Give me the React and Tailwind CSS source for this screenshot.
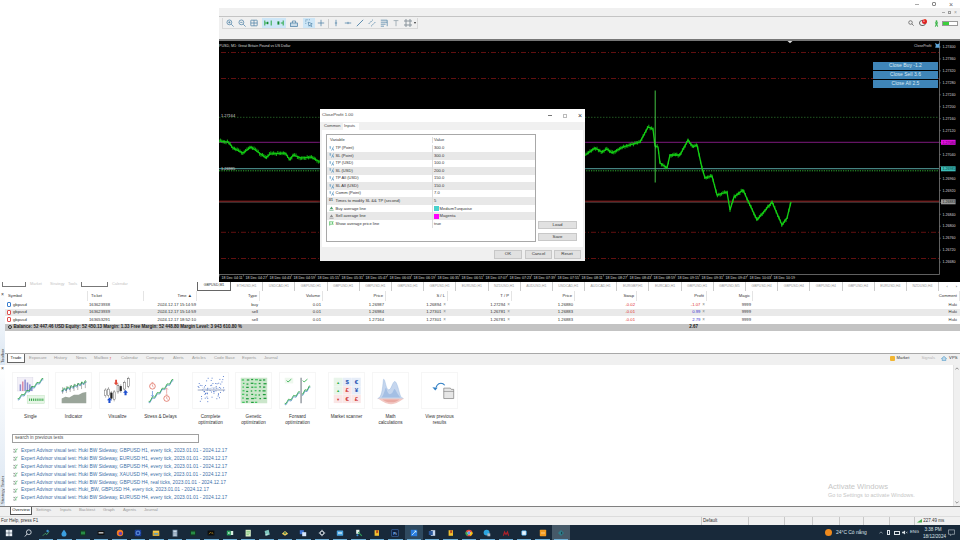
import { Fragment } from 'react'

const TIMES = ['04:11','04:27','04:43','04:59','05:15','05:31','05:47','06:03','06:19','06:35','06:51','07:07','07:23','07:39','07:55','08:11','08:27','08:43','08:59','09:15','09:31','09:47','10:03','10:19']
const PRICES = ['1.27400','1.27360','1.27320','1.27280','1.27240','1.27200','1.27160','1.27120','','1.27040','','1.26960','1.26920','','1.26840','1.26800','1.26760','1.26720','1.26680']

const CURVE = [[219,141],[228,142],[233,148],[243,153],[251,147],[258,152],[266,158],[270,154],[285,153],[290,160],[293,155],[301,158],[311,157],[320,162],[584,156],[595,148],[602,152],[607,149],[612,153],[623,147],[640,142],[648,127],[653,129],[655,146],[658,147],[660,163],[667,168],[670,155],[680,155],[688,140],[693,147],[697,145],[702,168],[705,178],[712,176],[717,195],[727,192],[730,210],[734,197],[743,190],[757,220],[772,202],[782,225],[787,218],[791,202]]

function curveY(x) {
  for (let i = 1; i < CURVE.length; i++) {
    if (x <= CURVE[i][0]) {
      const [x0, y0] = CURVE[i - 1]
      const [x1, y1] = CURVE[i]
      return y0 + ((y1 - y0) * (x - x0)) / (x1 - x0)
    }
  }
  return 202
}

function Candles() {
  const bars = []
  for (let x = 219; x < 791; x += 1.4) {
    if (x > 320 && x < 584) continue
    const y = curveY(x)
    const n = Math.sin(x * 12.9898) * 43758.5453
    const r = n - Math.floor(n)
    bars.push(<line key={x} x1={x} x2={x} y1={y - 0.8 - r * 1.8} y2={y + 0.8 + (1 - r) * 1.8} />)
  }
  const left = CURVE.filter((p) => p[0] <= 320).map((p) => p.join(',')).join(' ')
  const right = CURVE.filter((p) => p[0] >= 584).map((p) => p.join(',')).join(' ')
  return (
    <g stroke="#14cf14" strokeWidth="0.9" fill="none">
      <polyline points={left} strokeWidth="1.1" />
      <polyline points={right} strokeWidth="1.3" />
      {bars}
    </g>
  )
}

function Chart() {
  return (
    <svg viewBox="219 41 741 241" className="block h-[241px] w-[741px]">
      <rect x="219" y="41" width="741" height="241" fill="#000" />
      {[52.5, 78.5, 232.3, 258.5].map((y) => (
        <line key={y} x1="221" x2="939" y1={y} y2={y} stroke="#7a1414" strokeWidth="0.8" strokeDasharray="5 2 1 2" />
      ))}
      <line x1="219" x2="939" y1="117.3" y2="117.3" stroke="#2f7a2f" strokeWidth="0.7" strokeDasharray="1.5 1.5" />
      <line x1="219" x2="939" y1="142.3" y2="142.3" stroke="#8c1d8c" strokeWidth="0.9" />
      <line x1="219" x2="939" y1="168.7" y2="168.7" stroke="#5fb4b1" strokeWidth="0.9" />
      <line x1="219" x2="939" y1="170.8" y2="170.8" stroke="#2fae2f" strokeWidth="1" strokeDasharray="1.2 1.2" />
      <line x1="219" x2="939" y1="201.2" y2="201.2" stroke="#9a1a1a" strokeWidth="1" />
      <line x1="219" x2="939" y1="202.2" y2="202.2" stroke="#7a6a6a" strokeWidth="0.6" />
      <Candles />
      <line x1="655.2" x2="655.2" y1="90.5" y2="182.5" stroke="#4bd84b" strokeWidth="0.9" />
      <path d="M219 274.5H939.5V41" fill="none" stroke="#8a8a8a" strokeWidth="0.7" />
      <path d="M787.5 41h5l-2.5 2.2z" fill="#ddd" />
      <g fontSize="3.6" fill="#d8d8d8" fontFamily="'Liberation Sans',sans-serif">
        <text x="219" y="46.8">PUSD, M1:  Great Britain Pound vs US Dollar</text>
        <text x="914" y="46.8" fill="#cfcfcf">CloseProfit</text>
        <text x="221" y="116.5" fontSize="3.9">1.27164</text>
        <text x="221" y="170" fontSize="3.9">1.26985</text>
        {TIMES.map((t, i) => (
          <Fragment key={t}>
            <line x1={219.5 + i * 24} x2={219.5 + i * 24} y1="274.5" y2="276.5" stroke="#888" strokeWidth="0.5" />
            <text x={221.5 + i * 24} y="278.8">18 Dec {t}</text>
          </Fragment>
        ))}
        {PRICES.map((p, i) => (
          <Fragment key={i}>
            <line x1="939.5" x2="941" y1={47 + i * 11.95} y2={47 + i * 11.95} stroke="#888" strokeWidth="0.5" />
            {p && <text x="942.5" y={48.2 + i * 11.95}>{p}</text>}
          </Fragment>
        ))}
      </g>
      <path d="M935 43l2.5 1.3 2.5-1.3-.8 2.4.6 2.3h-4.6l.6-2.3z" fill="#5fa8dc" />
      <g fontSize="3.6" fontFamily="'Liberation Sans',sans-serif">
        <rect x="941" y="139.8" width="14.6" height="5" fill="#e010e0" />
        <text x="942.5" y="143.6" fill="#500050">1.27080</text>
        <rect x="941" y="166.3" width="14.6" height="5" fill="#3cbcb8" />
        <text x="942.5" y="170.1" fill="#083a3a">1.26985</text>
        <rect x="941" y="199.3" width="14.6" height="5" fill="#999" />
        <text x="942.5" y="203.1" fill="#222">1.26883</text>
      </g>
    </svg>
  )
}

const INPUTS = [
  ['v', 'TP (Point)', '300.0'],
  ['v', 'SL (Point)', '300.0'],
  ['v', 'TP (USD)', '100.0'],
  ['v', 'SL  (USD)', '200.0'],
  ['v', 'TP All (USD)', '150.0'],
  ['v', 'SL All (USD)', '150.0'],
  ['v', 'Comm (Point)', '7.0'],
  ['n', 'Times to modify SL && TP (second)', '5'],
  ['b', 'Buy average line', 'MediumTurquoise', 'bg-[#48d1cc]'],
  ['s', 'Sell average line', 'Magenta', 'bg-[#ff00ff]'],
  ['t', 'Show average price line', 'true'],
]

function InputIcon({ kind }) {
  if (kind === 'n') return <span className="w-[5px] text-[3.4px] font-bold leading-none text-[#444]">01</span>
  return (
    <svg viewBox="0 0 6 6" className="h-[5px] w-[5px] shrink-0">
      {kind === 'v' && <path d="M.5 1h2M1.5 1v2.6M3 5.5L5.5.5M3.6 3.6h2v2" fill="none" stroke="#3f86b8" strokeWidth=".7" />}
      {kind === 'b' && <path d="M3 .5l2 3H1zM.5 4.5h5v1h-5z" fill="#4f9f6f" />}
      {kind === 's' && <path d="M3 .5l2 3H1zM.5 4.5h5v1h-5z" fill="#888" />}
      {kind === 't' && <path d="M.8.5v5M.8 1h4.4L3.6 2.4l1.6 1.4H.8" fill="none" stroke="#39b54a" strokeWidth=".8" />}
    </svg>
  )
}

function DlgButton({ children, className = '' }) {
  return (
    <div className={`flex items-center justify-center border border-[#c8c8c8] bg-[#e1e1e1] text-[4.4px] text-[#333] ${className}`}>
      {children}
    </div>
  )
}

function Dialog() {
  return (
    <div className="absolute left-[101px] top-[68px] flex h-[152px] w-[265px] flex-col bg-[#f0f0f0] shadow-[0_0_3px_rgba(0,0,0,0.5)]">
      <div className="flex h-[13px] items-center justify-between bg-white pl-[2px] pr-[3px] text-[#444]">
        <span className="text-[4.4px]">CloseProfit 1.00</span>
        <div className="flex items-center gap-[11px] text-[#777]">
          <span className="h-px w-[4px] bg-[#777]" />
          <span className="h-[4px] w-[4px] border-[0.5px] border-[#bbb]" />
          <span className="text-[7px] leading-none text-[#333]">×</span>
        </div>
      </div>
      <div className="flex h-[8px] items-end pl-[3px] text-[4.1px] text-[#444]">
        <span className="w-[20px] pb-px pl-[1px]">Common</span>
        <span className="w-[16px] bg-white pb-px pl-[1px]">Inputs</span>
      </div>
      <div className="mx-[2px] flex h-[117px] bg-white p-[4px]">
        <div className="flex h-[108px] w-[210px] flex-col border border-[#a8a8a8] text-[4.1px] text-[#333]">
          <div className="flex h-[9.5px] shrink-0 items-center">
            <span className="w-[104.5px] pl-[3px]">Variable</span>
            <span className="border-l border-[#ddd] pl-[1.5px]">Value</span>
          </div>
          {INPUTS.map((r, i) => (
            <div key={r[1]} className={`flex h-[7.55px] shrink-0 items-center ${i % 2 ? 'bg-[#e8e8e8]' : 'bg-white'}`}>
              <div className="flex w-[104.5px] items-center gap-[1.5px] pl-[2px]">
                <InputIcon kind={r[0]} />
                <span className="whitespace-nowrap">{r[1]}</span>
              </div>
              <div className="flex h-full items-center gap-[1px] border-l border-[#ddd] pl-[1.5px]">
                {r[3] && <span className={`h-[5px] w-[4.5px] ${r[3]}`} />}
                <span>{r[2]}</span>
              </div>
            </div>
          ))}
        </div>
        <div className="ml-[1px] flex flex-1 flex-col justify-end gap-[4px] pb-[2px] pl-[1px] pr-[1px]">
          <DlgButton className="h-[8px] w-[39px]">Load</DlgButton>
          <DlgButton className="h-[8px] w-[39px]">Save</DlgButton>
        </div>
      </div>
      <div className="flex flex-1 items-center justify-end gap-[1.5px] pr-[4.5px]">
        <DlgButton className="h-[9px] w-[28px] border-[#2f7fbf]">OK</DlgButton>
        <DlgButton className="ml-[1.5px] h-[9px] w-[27px]">Cancel</DlgButton>
        <DlgButton className="h-[9px] w-[27px]">Reset</DlgButton>
      </div>
    </div>
  )
}

function ToolIcon({ d, active, w = 12 }) {
  return (
    <div className={`flex h-[10px] items-center justify-center ${active ? 'bg-[#cde6f7]' : ''}`} style={{ width: w }}>
      <svg viewBox="0 0 10 10" className="h-[8px] w-[8px]" fill="none" strokeWidth="0.9">{d}</svg>
    </div>
  )
}

const BL = '#4a7fa5'
function Toolbar() {
  return (
    <div className="flex h-[22px] items-start justify-between bg-[#f0f0f0] pr-[2px]">
      <div className="ml-[3px] mt-[1px] flex h-[11px] items-center border-x border-b border-[#d8d8d8]">
        <ToolIcon d={<g stroke={BL}><circle cx="4.2" cy="4.2" r="3" /><path d="M6.5 6.5L9.5 9.5M2.8 4.2h2.8M4.2 2.8v2.8" /></g>} w={13} />
        <ToolIcon d={<g stroke={BL}><circle cx="4.2" cy="4.2" r="3" /><path d="M6.5 6.5L9.5 9.5M2.8 4.2h2.8" /></g>} />
        <ToolIcon d={<g stroke={BL}><rect x="1" y="1.5" width="8" height="7" rx=".5" /><path d="M1 5h8M5 1.5v7" /></g>} />
        <div className="w-[1.5px]" />
        <ToolIcon active d={<g stroke="#2faa4a" strokeWidth="1.3"><path d="M1 2v6M1 5h3M9 2v6" /><path d="M4.5 3.5v3" stroke="#138a30" strokeWidth="2" /></g>} />
        <ToolIcon active d={<g stroke="#2faa4a" strokeWidth="1.3"><path d="M9 2v6M9 5H6" /><path d="M3 3v4" stroke="#138a30" strokeWidth="2.4" /></g>} />
        <div className="w-[2.5px]" />
        <ToolIcon d={<g stroke={BL}><rect x=".5" y="5" width="9" height="4.5" fill="#c9dbe8" /><path d="M3 5V2.5h4V5" /></g>} />
        <div className="w-[3px]" />
        <ToolIcon active d={<g stroke={BL}><path d="M1 1h5M1 1v5" strokeDasharray="1 1" /><path d="M4 4l5 2-2 1 1.5 2-1 .5L6 7.5 5 9z" fill="#e6f3fb" /></g>} />
        <ToolIcon d={<path d="M5 1v8M1 5h8" stroke={BL} />} />
        <div className="mx-[1px] h-[9px] w-px bg-[#ccc]" />
        <ToolIcon d={<path d="M5 1v8M3.6 5h2.8" stroke={BL} />} />
        <ToolIcon d={<path d="M1 5h8M5 3.6v2.8" stroke={BL} />} />
        <ToolIcon d={<path d="M1 9L9 1" stroke={BL} strokeWidth="1.1" />} />
        <ToolIcon d={<path d="M1 6L6 1M4 9l5-5" stroke={BL} strokeWidth="1.1" strokeDasharray="2 .8" />} />
        <ToolIcon d={<path d="M1 1.5h8M1 4h8M1 6.5h6M1 9h4M9 1.5V9" stroke={BL} />} />
        <ToolIcon d={<path d="M2 2h6M5 2v7" stroke="#8a9aa5" />} />
        <ToolIcon d={<g stroke="#5a6a75"><rect x="1" y="1" width="3" height="3" rx="1.5" /><rect x="6" y="1" width="3" height="3" rx="1.5" /><rect x="1" y="6" width="3" height="3" rx="1.5" /><rect x="6" y="6" width="3" height="3" rx="1.5" /></g>} />
        <span className="mr-[1px] h-0 w-0 border-x-[1.5px] border-t-[2px] border-x-transparent border-t-[#333]" />
      </div>
      <div className="mt-[1px] flex h-[10px] items-center">
        <svg viewBox="0 0 10 10" className="h-[6px] w-[6px]" fill="none" stroke="#555" strokeWidth="1.2"><circle cx="4.2" cy="4.2" r="3" /><path d="M6.5 6.5l3 3" /></svg>
        <div className="relative ml-[5px] h-[6px] w-[7px] rounded-full border border-[#666]">
          <span className="absolute -right-[2px] -top-[2px] flex h-[5px] w-[5px] items-center justify-center rounded-full bg-[#d22] text-[3.5px] leading-none text-white">1</span>
        </div>
        <svg viewBox="0 0 6 8" className="ml-[8px] h-[7px] w-[5px]" fill="#3cb54a"><circle cx="3" cy="1.2" r="1.1" /><path d="M1 2.6h4L4 5l1 3H4L3 6 2 8H1l1-3z" /></svg>
        <div className="ml-[3.5px] flex h-[5px] w-[16px] border border-[#999] bg-white">
          <div className="h-full w-[6px] bg-[#3bcf3b]" />
        </div>
      </div>
    </div>
  )
}

const DOC_TABS = [
  'GBPUSD,M1','ETHUSD,H1','USDCAD,H1','GBPUSD,H1','GBPUSD,H1','GBPUSD,H1','GBPUSD,H1','GBPUSD,H1','EURUSD,H1','NZDUSD,H1','AUDUSD,H1','USDCAD,H1','AUDCAD,H1','EURGBP,H1','EURCAD,H1','GBPUSD,H1','GBPUSD,M5','GBPUSD,H4','GBPUSD,H4','GBPUSD,H4','GBPUSD,H4','EURUSD,H4','NZDUSD,H4',
]

function DocTabs() {
  return (
    <div className="flex h-[9px] bg-white text-[3.9px]">
      <div className="flex w-[197px] items-start pl-[2px] leading-[4px] text-[#c4c4c4]">
        <span className="h-[5px] w-[24px] border-x border-b border-[#777]" />
        <span className="ml-[4px] w-[20px]">Market</span>
        <span className="w-[18px]">Strategy</span>
        <span className="w-[13px]">Tools</span>
        <span className="h-[5px] w-[27px] border-x border-b border-[#777]" />
        <span className="ml-[4px]">Calendar</span>
      </div>
      {DOC_TABS.map((t, i) => (
        <div
          key={i}
          className={`flex h-full w-[32.2px] shrink-0 items-center justify-center text-[3.5px] ${i === 0 ? 'h-[9px] w-[34px] border-x border-b border-[#666] pb-[0.5px] text-[#333]' : 'border-r border-[#ccc] text-[#9a9a9a]'}`}
        >
          {t}
        </div>
      ))}
      <div className="flex flex-1 items-center justify-end gap-[8px] pr-[3px] text-[#555]">
        <span>‹</span>
        <span className="text-[#222]">›</span>
      </div>
    </div>
  )
}

const COLS = 'grid grid-cols-[83px_56px_53px_63px_63px_63px_62px_64px_63px_62px_70px_46px_207px]'
const HEAD = ['Symbol', 'Ticket', 'Time  ▲', 'Type', 'Volume', 'Price', 'S / L', 'T / P', 'Price', 'Swap', 'Profit', 'Magic', 'Comment']
const TRADES = [
  ['buy', '163623938', '2024.12.17 15:14:59', '0.01', '1.26987', '1.26894', '1.27294', '1.26880', '-0.02', '-1.07', 'text-[#e03030]', '#3a7fd0'],
  ['sell', '163623939', '2024.12.17 15:14:59', '0.01', '1.26984', '1.27301', '1.26781', '1.26883', '-0.01', '0.99', 'text-[#3030d0]', '#e05050'],
  ['sell', '163653291', '2024.12.17 18:52:10', '0.01', '1.27164', '1.27301', '1.26781', '1.26883', '-0.01', '2.79', 'text-[#3030d0]', '#e05050'],
]

function TradeRow({ t, alt }) {
  const cell = 'flex items-center justify-end pr-[2px]'
  const x = <span className="ml-[2px] text-[4.6px] leading-none text-[#888]">×</span>
  return (
    <div className={`${COLS} h-[7.6px] text-[#333] ${alt ? 'bg-[#e9e9e9]' : 'bg-white'}`}>
      <div className="flex items-center gap-[2px] pl-[2px]">
        <span className="flex h-[5px] w-[4px] items-center justify-center rounded-[1px] border-[0.5px] bg-white" style={{ borderColor: t[11] }} />
        <span>gbpusd</span>
      </div>
      <div className="flex items-center pl-[1px]">{t[1]}</div>
      <div className="flex items-center justify-end pr-[1px]">{t[2]}</div>
      <div className={cell}>{t[0]}</div>
      <div className={cell}>{t[3]}</div>
      <div className={cell}>{t[4]}</div>
      <div className={cell}>{t[5]}{x}</div>
      <div className={cell}>{t[6]}{x}</div>
      <div className={cell}>{t[7]}</div>
      <div className={`${cell} text-[#e03030]`}>{t[8]}</div>
      <div className={cell}><span className={t[10]}>{t[9]}</span>{x}</div>
      <div className={cell}>9999</div>
      <div className={`${cell} pr-[3px]`}>Huki</div>
    </div>
  )
}

const TOOL_TABS = [
  ['Exposure', 'w-[25px]'], ['History', 'w-[22px]'], ['News', 'w-[18px]'], ['Mailbox', 'w-[27px]'], ['Calendar', 'w-[25px]'],
  ['Company', 'w-[27px]'], ['Alerts', 'w-[19px]'], ['Articles', 'w-[22px]'], ['Code Base', 'w-[28px]'], ['Experts', 'w-[22px]'], ['Journal', 'w-[24px]'],
]
const TESTER_TABS = [
  ['Settings', 'w-[24px]'], ['Inputs', 'w-[19px]'], ['Backtest', 'w-[24px]'], ['Graph', 'w-[20px]'], ['Agents', 'w-[21px]'], ['Journal', 'w-[24px]'],
]

function SideStrip({ label, h }) {
  return (
    <div className="relative flex w-[5px] shrink-0 flex-col items-center bg-gradient-to-b from-white to-[#dbe6f2]">
      <span className="text-[5px] leading-[7px] text-[#333]">×</span>
      <span className="absolute bottom-[2px] left-0 w-[5px] whitespace-nowrap text-[4.2px] leading-[5px] text-[#444] [writing-mode:vertical-rl] rotate-180" style={{ height: h }}>{label}</span>
    </div>
  )
}

function Toolbox() {
  return (
    <div className="flex h-[74px] text-[4.2px]">
      <SideStrip label="Toolbox" h={16} />
      <div className="flex min-w-0 flex-1 flex-col bg-white">
        <div className={`${COLS} h-[10px] text-[#333]`}>
          {HEAD.map((h, i) => (
            <div key={i} className={`flex items-center border-r border-[#e4e4e4] ${i < 2 ? 'pl-[3px]' : i === 2 ? 'justify-end pr-[4px]' : 'justify-end pr-[2px]'}`}>{h}</div>
          ))}
        </div>
        {TRADES.map((t, i) => <TradeRow key={i} t={t} alt={i === 1} />)}
        <div className="relative flex h-[7.4px] items-center bg-[#c3c3c3] pl-[3px] text-[4.5px] font-bold text-[#222]">
          <span className="mr-[1.5px] h-[4px] w-[4px] rounded-full border-[0.6px] border-[#333]" />
          Balance: 52 447.46 USD  Equity: 52 450.13  Margin: 1.33  Free Margin: 52 448.80  Margin Level: 3 943 610.80 %
          <span className="absolute left-[204px] top-0 flex h-full w-[489px] items-center justify-end">2.67</span>
        </div>
        <div className="flex-1" />
        <div className="flex h-[12px] items-start border-t border-[#a8a8a8] bg-[#f0f0f0]">
          <span className="ml-[2px] flex h-[9px] w-[18px] items-center justify-center border-x border-b border-[#666] bg-white text-[#222]">Trade</span>
          <span className="w-[4px]" />
          {TOOL_TABS.map(([t, w]) => (
            <span key={t} className={`flex h-[8px] shrink-0 items-center text-[#9a9a9a] ${w}`}>
              {t}
              {t === 'Mailbox' && <span className="ml-px mt-[3px] text-[3px] leading-none text-[#d33]">7</span>}
            </span>
          ))}
          <div className="ml-auto flex h-[9px] items-center pr-[2.5px]">
            <span className="h-[4.5px] w-[4.5px] rounded-[1px] bg-[#f2b632]" />
            <span className="ml-[2px] text-[#333]">Market</span>
            <span className="ml-[12px] text-[#b5b5b5]">Signals</span>
            <svg viewBox="0 0 8 7" className="ml-[6px] h-[5px] w-[6px]" fill="#bcd8ea" stroke="#3a8cc0" strokeWidth=".7"><path d="M.5 3.5L4 .5l3.5 3H6.5V6.5h-5V3.5z" /></svg>
            <span className="ml-[2px] text-[#333]">VPS</span>
          </div>
        </div>
      </div>
    </div>
  )
}

function Wave({ from, to, bumps = 5 }) {
  const pts = (off) => {
    const out = []
    const n = bumps * 4
    for (let i = 0; i <= n; i++) {
      const f = i / n
      const x = from[0] + (to[0] - from[0]) * f
      const y = from[1] + (to[1] - from[1]) * f + Math.sin(f * bumps * 6.283) * 1.3 + off
      out.push(`${x.toFixed(1)},${y.toFixed(1)}`)
    }
    return out.join(' ')
  }
  return (
    <g fill="none">
      <polyline points={pts(1.3)} stroke="#5a93c7" strokeWidth=".9" />
      <polyline points={pts(0)} stroke="#2fa84a" strokeWidth=".9" />
    </g>
  )
}

function rnd(i) {
  const n = Math.sin(i * 78.233) * 12345.678
  return n - Math.floor(n)
}

const CARD_ART = {
  single: (
    <>
      <rect x="5" y="5" width="16" height="14" fill="#f3f0f8" stroke="#d8d4e4" strokeWidth=".5" />
      {[[7,12],[9.5,9],[12,7],[14.5,10],[17,12],[19,14]].map(([x, y]) => (
        <rect key={x} x={x} y={y} width="1.6" height={19 - y} fill={x % 2 > 1 ? '#d98ba8' : '#8d8dd0'} />
      ))}
      <Wave from={[5, 27]} to={[32, 6]} />
      <rect x="15" y="24" width="18" height="8" fill="#e6f5e6" stroke="#b8e0b8" strokeWidth=".5" />
      <g fill="#39a84a">{[17,19,21,23,25,27,29,31].map((x) => <rect key={x} x={x} y="27" width="1.1" height="2.5" />)}</g>
    </>
  ),
  indicator: (
    <>
      <path d="M6 27l4-2 4 1 5-3 5 0 4-2 4-1v12H6z" fill="#9aa59a" />
      <Wave from={[6, 18]} to={[32, 9]} bumps={7} />
      <g stroke="#333" strokeWidth=".4">{[7,11,15,19,23,27,31].map((x, i) => <path key={x} d={`M${x} ${15 - i}v${7}`} />)}</g>
    </>
  ),
  visualize: (
    <>
      {[[6,18,6],[9,17,7],[12,21,6],[15,20,8],[19,13,7],[22,14,5],[26,10,7],[30,6,8]].map(([x, y, h], i) => (
        <g key={x}>
          <path d={`M${x} ${y - 2}v${h + 4}`} stroke="#333" strokeWidth=".4" />
          <rect x={x - 1} y={y} width="2" height={h} fill={i % 3 === 2 ? '#222' : '#fff'} stroke="#333" strokeWidth=".4" />
        </g>
      ))}
      <path d="M17 7l2.4 2.8h-1.4v3h-2v-3h-1.4z" transform="rotate(180 17 10)" fill="#e04a3a" />
      <path d="M10 26l2.6 2.8h-1.5v2.8h-2.2v-2.8H7.4z" fill="#1e4fd0" />
      <path d="M27 18l2.6 2.8h-1.5v2.8h-2.2v-2.8h-1.5z" fill="#1e4fd0" />
    </>
  ),
  stress: (
    <>
      <Wave from={[6, 30]} to={[32, 7]} />
      <circle cx="10" cy="14" r="3" fill="#fff" stroke="#d85040" strokeWidth=".7" />
      <path d="M10 12.2V14l1.2.8M9 10h2" stroke="#d85040" strokeWidth=".5" fill="none" />
      <path d="M10 19v6M8.6 23.5L10 25l1.4-1.5" stroke="#4a7fd0" strokeWidth=".7" fill="none" />
      <circle cx="25" cy="27" r="3" fill="#fff" stroke="#d85040" strokeWidth=".7" />
      <path d="M25 25.2V27l1.2.8M24 23h2" stroke="#d85040" strokeWidth=".5" fill="none" />
      <path d="M25 22v-6M23.6 17.5L25 16l1.4 1.5" stroke="#e08a8a" strokeWidth=".7" fill="none" />
    </>
  ),
  complete: (
    <>
      {Array.from({ length: 60 }, (_, i) => {
        const x = 5 + rnd(i) * 28
        const spread = 4 + Math.abs(rnd(i + 100)) * 12
        const y = 18 + (rnd(i + 200) > 0.5 ? 1 : -1) * rnd(i + 300) * spread
        return <rect key={i} x={x} y={y} width=".9" height=".9" fill="#2d5bc0" />
      })}
      <path d="M5 18h29" stroke="#8a9ab8" strokeWidth=".9" />
      <path d="M10 15.5c3 2 5 2 8 1s6-2 10 1" stroke="#a8b8d8" strokeWidth=".6" fill="none" />
    </>
  ),
  genetic: (
    <>
      <rect x="5" y="5" width="28" height="27" fill="#cbe6cb" />
      {Array.from({ length: 40 }, (_, i) => (
        <rect key={i} x={6 + (i % 6) * 4.4 + rnd(i) * 1.4} y={6.2 + Math.floor(i / 6) * 3.9 + rnd(i + 7)} width={1.5 + rnd(i + 3) * 1.8} height="1.3" fill={i % 3 ? '#1e9c3a' : '#3bc35a'} />
      ))}
    </>
  ),
  forward: (
    <>
      <rect x="5" y="5" width="9" height="6" fill="#eef8ee" />
      <path d="M7 8l1.5 1.5L12 6.5" stroke="#2fae4a" strokeWidth=".9" fill="none" />
      <path d="M24 8l1.5 1.5L29 6.5" stroke="#2fae4a" strokeWidth=".9" fill="none" />
      <Wave from={[5, 32]} to={[21, 20]} bumps={3} />
      <Wave from={[23, 22]} to={[32, 14]} bumps={2} />
      <rect x="21.5" y="5" width="1.6" height="27" fill="#9aa0a6" />
    </>
  ),
  math: (
    <>
      <path d="M5 27c4-1 5-9 6-20 1-2 2 4 3 7s2 5 4 3 3-8 5-8 4 8 5 12 2 5 4 6z" fill="#c5d6ee" stroke="#8fb0dc" strokeWidth=".4" />
      <path d="M9 26c3-3 4-12 5-10s2 8 5 6 3-6 4-5 3 6 6 9z" fill="#a4bfe4" />
      <path d="M5 27h28c-4 2-8 6-14 6S9 29 5 27z" fill="#f2c9c4" />
      <path d="M10 28h18c-3 2-5 3-9 3s-6-1-9-3z" fill="#e9a9a2" />
    </>
  ),
  previous: (
    <>
      <path d="M23 16h7l1 1.3h2.5V27H23z" fill="#e6e6e6" stroke="#777" strokeWidth=".7" />
      <path d="M23 19.5h10.5" stroke="#777" strokeWidth=".6" />
      <path d="M24 13c-2-3-6-3-8 0l-1.2 2.4" fill="none" stroke="#2f7ec4" strokeWidth="1.1" />
      <path d="M11 15l3 3.5 2.5-3z" fill="#2f7ec4" />
    </>
  ),
}

const SCAN = [
  ['▲', '$', '€', '#2fae4a', '#1a4fb0', '#1a4fb0', '#e8f5ea', '#e6edf8', '#e6edf8'],
  ['▲', '£', '¥', '#2fae4a', '#d03030', '#1a4fb0', '#e8f5ea', '#fae6e6', '#e6edf8'],
  ['▼', '€', '£', '#d03030', '#d03030', '#d03030', '#fae6e6', '#fae6e6', '#fae6e6'],
]

function ScannerArt() {
  return SCAN.map((row, r) => (
    <g key={r}>
      {[0, 1, 2].map((c) => (
        <Fragment key={c}>
          <rect x={5 + c * 9.6} y={5 + r * 9} width="9.4" height="8.8" fill={row[6 + c]} />
          <text x={9.7 + c * 9.6} y={11.6 + r * 9} fontSize={c ? 6.5 : 4} fontWeight="700" textAnchor="middle" fill={row[3 + c]} fontFamily="'Liberation Sans',sans-serif">{row[c]}</text>
        </Fragment>
      ))}
    </g>
  ))
}

const CARDS = [
  ['single', ['Single'], 'ml-[7px]'],
  ['indicator', ['Indicator'], 'ml-[6px]'],
  ['visualize', ['Visualize'], 'ml-[7px]'],
  ['stress', ['Stress & Delays'], 'ml-[6px]'],
  ['complete', ['Complete', 'optimization'], 'ml-[13px]'],
  ['genetic', ['Genetic', 'optimization'], 'ml-[6px]'],
  ['forward', ['Forward', 'optimization'], 'ml-[7px]'],
  ['scanner', ['Market scanner'], 'ml-[12px]'],
  ['math', ['Math', 'calculations'], 'ml-[7px]'],
  ['previous', ['View previous', 'results'], 'ml-[12px]'],
]

const TESTS = [
  'Huki BW Sideway, GBPUSD H1, every tick',
  'Huki BW Sideway, EURUSD H1, every tick',
  'Huki BW Sideway, GBPUSD H4, every tick',
  'Huki BW Sideway, XAUUSD H4, every tick',
  'Huki BW Sideway, GBPUSD H4, real ticks',
  'Huki_BW, GBPUSD H4, every tick',
  'Huki BW Sideway, EURUSD H4, every tick',
]

function Tester() {
  return (
    <div className="flex h-[141px] text-[4.9px]">
      <SideStrip label="Strategy Tester" h={28} />
      <div className="relative flex min-w-0 flex-1 flex-col bg-white">
        <div className="flex pt-[7px]">
          {CARDS.map(([id, label, ml]) => (
            <div key={id} className={`flex w-[37px] shrink-0 flex-col items-center ${ml}`}>
              <div className="h-[37px] w-[37px] border border-[#f6f6f6]">
                <svg viewBox="0 0 37 37" className="h-full w-full">
                  {id === 'scanner' ? <ScannerArt /> : CARD_ART[id]}
                </svg>
              </div>
              <div className="-mx-[4px] mt-[5px] whitespace-nowrap text-center text-[4.6px] leading-[6px] text-[#333]">
                {label.map((l) => <div key={l}>{l}</div>)}
              </div>
            </div>
          ))}
        </div>
        <div className="ml-[7px] mt-[8px] flex h-[9px] w-[187px] items-center border border-[#a0a0a0] pl-[2px] text-[4.6px] text-[#555]">search in previous tests</div>
        <div className="mt-[3.5px] flex flex-col">
          {TESTS.map((t, i) => (
            <div key={i} className="ml-[8px] flex h-[7.95px] items-center gap-[3px]">
              <svg viewBox="0 0 6 6" className="h-[5px] w-[5px] shrink-0" fill="none" strokeWidth=".8">
                <path d="M.5 1.5l1 1 1.2-1.6M.5 4.5l1 1 1.2-1.6" stroke="#555" />
                <path d="M5.5 1.2A2.2 2.2 0 0 0 3.4 3v2.5" stroke="#2fa84a" />
              </svg>
              <span className="whitespace-nowrap text-[#3d70a8]">Expert Advisor visual test: {t}, 2023.01.01 - 2024.12.17</span>
            </div>
          ))}
        </div>
        <div className="absolute right-0 top-0 flex h-full w-[7px] flex-col items-center justify-between border-l border-[#e4e4e4] bg-[#f0f0f0] py-[2px] text-[#555]">
          <svg viewBox="0 0 6 4" className="h-[3px] w-[4px]" fill="none" stroke="#555" strokeWidth=".9"><path d="M.5 3.5L3 1l2.5 2.5" /></svg>
          <svg viewBox="0 0 6 4" className="h-[3px] w-[4px]" fill="none" stroke="#555" strokeWidth=".9"><path d="M.5.5L3 3 5.5.5" /></svg>
        </div>
        <div className="absolute left-[823px] top-[117px] text-[#c6c6c6]">
          <div className="text-[7.6px] leading-[9px]">Activate Windows</div>
          <div className="mt-[1px] text-[5.5px] leading-[6px]">Go to Settings to activate Windows.</div>
        </div>
      </div>
    </div>
  )
}

function TesterTabs() {
  return (
    <div className="flex h-[10px] items-start border-t border-[#808080] bg-[#f0f0f0] pl-[10px] text-[4.2px]">
      <span className="flex h-[8px] w-[22px] items-center justify-center border-x border-b border-[#555] bg-white text-[#222]">Overview</span>
      <span className="w-[4px]" />
      {TESTER_TABS.map(([t, w]) => (
        <span key={t} className={`flex h-[7px] shrink-0 items-center text-[#9a9a9a] ${w}`}>{t}</span>
      ))}
    </div>
  )
}

function StatusBar() {
  const dividers = ['w-[47px]', 'w-[36px]', 'w-[27.7px]', 'w-[27px]', 'w-[24.7px]', 'w-[25.7px]', 'w-[25.3px]']
  return (
    <div className="flex h-[9px] items-center border-t border-[#dcdcdc] bg-[#f0f0f0] text-[4.5px] text-[#333]">
      <span className="w-[701px] pl-[1px]">For Help, press F1</span>
      {dividers.map((w, i) => (
        <span key={i} className={`h-full shrink-0 border-l border-[#c8c8c8] pl-[1px] leading-[8px] ${w}`}>{i === 0 ? 'Default' : ''}</span>
      ))}
      <span className="flex h-full flex-1 items-center gap-[1px] whitespace-nowrap border-l border-[#c8c8c8] pl-[2px]">
        <svg viewBox="0 0 6 4" className="h-[3.5px] w-[5px]"><path d="M0 4l6-4v4z" fill="#4caf50" /></svg>
        227.49 ms
      </span>
    </div>
  )
}

const sq = (color) => <rect x="1.5" y="1.5" width="7" height="7" rx="1" fill={color} />
const TASK_ICONS = [
  <g fill="#e8eef4"><rect x="1" y="1" width="3.7" height="3.7" /><rect x="5.3" y="1" width="3.7" height="3.7" /><rect x="1" y="5.3" width="3.7" height="3.7" /><rect x="5.3" y="5.3" width="3.7" height="3.7" /></g>,
  <g fill="none" stroke="#e8eef4" strokeWidth="1"><circle cx="6" cy="4" r="3" /><path d="M3.8 6.2L1 9.5" /></g>,
  <g><path d="M1 8.5l3-3 2 1.5 3-4" stroke="#4fb06a" strokeWidth="1" fill="none" /><circle cx="7" cy="2.5" r="1.5" fill="#3a8fd0" /></g>,
  <path d="M5 .8C6.8 3.2 8.2 4.6 8.2 6.2A3.2 3.2 0 0 1 1.8 6.2C1.8 4.6 3.2 3.2 5 .8z" fill="#3b9fe0" />,
  <g>{sq('#123a22')}<path d="M2.5 4h5M2.5 6h5" stroke="#3ddc6a" strokeWidth=".9" /></g>,
  <g><rect x=".8" y="2.5" width="8.4" height="5" fill="#111" /><path d="M2 4h6v1.6H2z" fill="#ddd" /></g>,
  <g><circle cx="5" cy="5" r="4" fill="#f57c20" /><circle cx="5.5" cy="5.5" r="2.2" fill="#6a3fb5" /></g>,
  <g><rect x="1" y="1" width="8" height="8" rx="1" fill="#1a3f9c" /><circle cx="5" cy="5" r="2.4" fill="none" stroke="#8ec5ff" strokeWidth=".8" /></g>,
  <g><rect x="1" y="2" width="8" height="6.5" fill="#f2c94c" /><rect x="1" y="4.5" width="8" height="4" fill="#d8a52c" /><rect x="2.5" y="5.3" width="5" height="1.6" fill="#4aa3df" /></g>,
  <g><rect x="2" y="1" width="6" height="8.5" fill="#7a93ad" /><rect x="3" y="2" width="4" height="1.6" fill="#d6e4f0" /><path d="M3 5h4M3 6.6h4M3 8.2h4" stroke="#e8eef4" strokeWidth=".7" /></g>,
  <g>{sq('#123a22')}<path d="M2.5 4h5M2.5 6h5" stroke="#3ddc6a" strokeWidth=".9" /></g>,
  <g><rect x=".8" y="2" width="8.4" height="6" fill="#0c0c0c" /><path d="M2.4 6.5l2-2.5 1.2 1.4 1-1 1 2.1" stroke="#d4a62a" strokeWidth=".7" fill="none" /></g>,
  <g><rect x="1" y="2" width="5" height="6" fill="#1f9d55" /><rect x="6" y="2.5" width="3" height="5" fill="#d9efe2" /><path d="M2.3 3.5l2.4 3M4.7 3.5l-2.4 3" stroke="#fff" strokeWidth=".7" /></g>,
  <g><rect x="2" y="1" width="6.5" height="8.4" fill="#d9efc8" /><path d="M3 3h4.5M3 5h4.5M3 7h3" stroke="#4caf50" strokeWidth=".7" /></g>,
  <g><path d="M2 2.5l5-1.5 1.5 6-5 1.8z" fill="#7fc7c0" /><path d="M2.5 7.5l4-1.2" stroke="#e8f4f3" strokeWidth=".8" /></g>,
  <g><path d="M1 6l4-3.5L9 6 5 8.5z" fill="#e8c95a" /><circle cx="5" cy="5" r="1.2" fill="#3b7b4a" /></g>,
  <g><rect x="1" y="1.5" width="5" height="5" fill="#3f74d8" /><rect x="4" y="4" width="5" height="5" fill="#d8e6fa" /></g>,
  <g fill="none" stroke="#e8eef4"><circle cx="5" cy="5" r="2.4" strokeWidth="1.2" /><path d="M5 1v1.4M5 7.6V9M1 5h1.4M7.6 5H9" strokeWidth="1.1" /></g>,
  <g><rect x="1" y="2" width="8" height="6.5" rx=".6" fill="#4aa3df" /><path d="M2.5 4h5v2h-5z" fill="#bfe3f7" /></g>,
  <g><rect x="1.5" y="1" width="4" height="5" fill="#e6f2ea" /><path d="M4 4l4.5 4.5" stroke="#2f9f5a" strokeWidth="1.4" /><circle cx="3" cy="7.8" r="1.3" fill="#3a8fd0" /></g>,
  <g><path d="M2 1.5h5.5v7H2z" fill="#f2c230" /><path d="M4 1.5h2.5v4l-1.2-.8-1.3.8z" fill="#b8451f" /></g>,
  <g><rect x="1" y="1" width="8" height="8" fill="#0e1f3d" stroke="#4b7fcf" strokeWidth=".6" /><text x="5" y="7" fontSize="4.6" fontWeight="700" textAnchor="middle" fill="#8ec1f5" fontFamily="'Liberation Sans',sans-serif">Pt</text></g>,
  <g><rect x="1" y="1" width="8" height="8" fill="#2a7de1" /><path d="M2.5 7.5L7.5 2.5M5.5 2.5h2v2" stroke="#dff" strokeWidth=".9" fill="none" /></g>,
  <g><rect x="3.5" y="1.5" width="5.5" height="7" fill="#c8d8f0" /><rect x="1" y="2.5" width="5" height="5" fill="#2b579a" /></g>,
  <g><path d="M2 1.5h5.5v7H2z" fill="#f2c230" /><path d="M4 1.5h2.5v4l-1.2-.8-1.3.8z" fill="#b8451f" /></g>,
  <g><circle cx="5" cy="5" r="4.2" fill="#e8453c" /><path d="M5 5l3.8-2a4.2 4.2 0 0 1-2 5.8z" fill="#f4c20d" /><path d="M5 5L3 8.7A4.2 4.2 0 0 1 1.2 3z" fill="#34a853" /><circle cx="5" cy="5" r="1.8" fill="#4285f4" stroke="#fff" strokeWidth=".5" /></g>,
  <g><circle cx="4.5" cy="4.5" r="3.7" fill="#2ca5e0" /><rect x="5.5" y="5.5" width="3.6" height="3.6" fill="#aab8c2" /></g>,
  <path d="M1 8.5L3 2l2 3.5L7 2l2 6.5H7.5L6.6 5.5 5 8 3.4 5.5 2.5 8.5z" fill="#b3202a" />,
  <g><rect x="2.2" y="2.2" width="5.6" height="5.6" rx=".8" fill="#eaf6ff" stroke="#35a7f2" strokeWidth=".8" /></g>,
  <g><rect x="1" y="1" width="8" height="8" rx=".8" fill="#f29a1f" /><path d="M2.5 5h5" stroke="#ffe1b0" strokeWidth=".9" /></g>,
  <g><path d="M5 1.2L8.8 5 5 8.8 1.2 5z" fill="#2f7d8a" /><path d="M5 3L7 5 5 7z" fill="#183c46" /></g>,
]
const HILITE = { 22: 'bg-[#2f4a60]', 30: 'bg-[#465968]' }

function Taskbar() {
  return (
    <div className="flex h-[15px] items-stretch bg-[#18293a] text-[4.9px] text-[#dde4ea]">
      {TASK_ICONS.map((ic, i) => (
        <div key={i} className={`relative flex w-[18.4px] shrink-0 items-center justify-center ${HILITE[i] || ''}`}>
          <svg viewBox="0 0 10 10" className="h-[8px] w-[8px]">{ic}</svg>
          {i > 1 && <span className="absolute bottom-0 left-[2px] right-[2px] h-px bg-[#6fb0d8]" />}
        </div>
      ))}
      <div className="ml-auto flex items-center pr-[5px]">
        <span className="h-[7.5px] w-[7.5px] rounded-full bg-[#f08a1d]" />
        <span className="ml-[4px] w-[41px] whitespace-nowrap">24°C  Có nắng</span>
        <svg viewBox="0 0 6 4" className="ml-[2px] h-[3px] w-[4px]" fill="none" stroke="#dde4ea" strokeWidth=".8"><path d="M.5 3.5L3 1l2.5 2.5" /></svg>
        <span className="ml-[4px] h-[5px] w-[3px] border-[0.5px] border-[#dde4ea]" />
        <span className="ml-[4px] h-[4px] w-[6px] border-[0.6px] border-[#dde4ea]" />
        <svg viewBox="0 0 7 6" className="ml-[2px] h-[5px] w-[6px]" fill="#dde4ea"><path d="M0 2h1.5L3.5.5v5L1.5 4H0z" /><path d="M4.5 2l2 2M6.5 2l-2 2" stroke="#dde4ea" strokeWidth=".6" /></svg>
        <span className="ml-[2px] w-[10px] text-[4.2px]">ENG</span>
        <div className="ml-[3px] w-[20px] text-center text-[4.6px] leading-[7px]">
          <div>3:38 PM</div>
          <div>18/12/2024</div>
        </div>
        <svg viewBox="0 0 8 8" className="ml-[5px] h-[7px] w-[7px]" fill="none" stroke="#dde4ea" strokeWidth=".6"><path d="M.5 1h7v5H4.5L3 7.5V6H.5z" /></svg>
      </div>
    </div>
  )
}

export default function App() {
  return (
    <div className="flex h-[540px] w-[960px] flex-col overflow-hidden bg-white font-['Liberation_Sans',sans-serif]">
      {/* window frame */}
      <div className="flex h-[8px] items-center justify-end gap-[13px] bg-white pr-[7px] text-[#777]">
        <span className="h-px w-[4px] bg-[#aaa]" />
        <span className="h-[4px] w-[4px] rounded-[1px] border-[0.6px] border-[#888]" />
        <span className="text-[7px] leading-none text-[#666]">×</span>
      </div>

      <div className="flex h-[274px]">
        <div className="w-[219px] shrink-0 bg-white" />
        <div className="flex min-w-0 flex-1 flex-col">
          <div className="flex h-[8px] items-center justify-end gap-[3px] bg-[#f0f0f0] pr-[3px] text-[#999]">
            <span className="h-px w-[3px] bg-[#aaa]" />
            <span className="h-[3px] w-[3px] border-[0.5px] border-[#999]" />
            <span className="text-[5px] leading-none">×</span>
          </div>
          <div className="h-px bg-[#c4c4c4]" />
          <Toolbar />
          <div className="h-[2px] bg-[#777]" />
          <div className="relative">
            <Chart />
            <div className="absolute left-[654px] top-[21px] flex w-[65px] flex-col gap-[1.5px]">
              {['Close Buy -1.2', 'Close Sell 3.6', 'Close All 2.5'].map((t) => (
                <div key={t} className="flex h-[7.7px] items-center justify-center bg-[#3f85b8] text-[5px] text-[#d8e8f2]">{t}</div>
              ))}
            </div>
            <Dialog />
          </div>
        </div>
      </div>

      <DocTabs />
      <Toolbox />
      <Tester />
      <TesterTabs />
      <StatusBar />
      <Taskbar />
    </div>
  )
}
